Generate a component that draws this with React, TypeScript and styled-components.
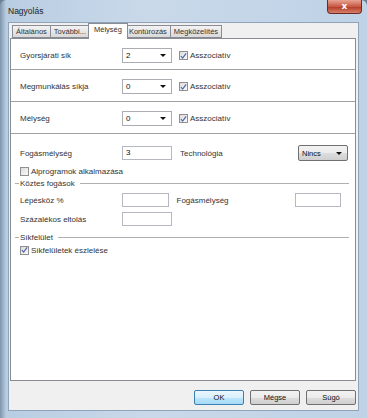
import styled, { createGlobalStyle } from 'styled-components';

const GlobalStyle = createGlobalStyle`
  html, body {
    margin: 0;
    padding: 0;
    background: #6e7f92;
  }
  body {
    font-family: "Liberation Sans", Arial, sans-serif;
  }
`;

const tabs = ['Általános', 'További...', 'Mélység', 'Kontúrozás', 'Megközelítés'];

export default function App() {
  return (
    <>
      <GlobalStyle />
      <Window>
        <TitleBar>
          <Title>Nagyolás</Title>
          <CloseButton>x</CloseButton>
        </TitleBar>
        <Client>
          <TabStrip>
            {tabs.map(t => (
              <Tab key={t} $active={t === 'Mélység'}>
                {t}
              </Tab>
            ))}
          </TabStrip>
          <Panel>
            <Row>
              <Label>Gyorsjárati sík</Label>
              <Combo>
                <span>2</span>
                <Arrow />
              </Combo>
              <Check checked>Asszociatív</Check>
            </Row>
            <Row>
              <Label>Megmunkálás síkja</Label>
              <Combo>
                <span>0</span>
                <Arrow />
              </Combo>
              <Check checked>Asszociatív</Check>
            </Row>
            <Row>
              <Label>Mélység</Label>
              <Combo>
                <span>0</span>
                <Arrow />
              </Combo>
              <Check checked>Asszociatív</Check>
            </Row>
            <Section>
              <Line>
                <Label>Fogásmélység</Label>
                <Field>3</Field>
                <Label $wide>Technológia</Label>
                <DropButton>
                  <span>Nincs</span>
                  <Arrow />
                </DropButton>
              </Line>
              <Line $mt={4}>
                <Check>Alprogramok alkalmazása</Check>
              </Line>
              <Group>Köztes fogások</Group>
              <Line $mt={3}>
                <Label>Lépésköz %</Label>
                <Field />
                <Label $wide>Fogásmélység</Label>
                <Field />
              </Line>
              <Line $mt={5}>
                <Label>Százalékos eltolás</Label>
                <Field />
              </Line>
              <Group $mt={4}>Síkfelület</Group>
              <Line $mt={-1}>
                <Check checked>Síkfelületek észlelése</Check>
              </Line>
            </Section>
          </Panel>
          <Footer>
            <Button $default>OK</Button>
            <Button>Mégse</Button>
            <Button>Súgó</Button>
          </Footer>
        </Client>
      </Window>
    </>
  );
}

function Check({ checked, children }: { checked?: boolean; children: React.ReactNode }) {
  return (
    <CheckWrap>
      <Box>
        {checked && (
          <svg width="8" height="8" viewBox="0 0 8 8">
            <path d="M1 4 L3 6.5 L7 1" fill="none" stroke="#4a62a8" strokeWidth="1.3" />
          </svg>
        )}
      </Box>
      {children}
    </CheckWrap>
  );
}

const Window = styled.div`
  width: 367px;
  height: 418px;
  box-sizing: border-box;
  padding: 0 8px 7px 8px;
  display: flex;
  flex-direction: column;
  background: linear-gradient(90deg, #7f95ab 0px, #b9cde2 6px, #c9d9ea 40%, #bfd2e6 100%);
  border-radius: 6px 6px 0 0;
`;

const TitleBar = styled.div`
  height: 22px;
  display: flex;
  justify-content: space-between;
  align-items: flex-start;
`;

const Title = styled.div`
  margin-top: 6px;
  font-size: 8.5px;
  color: #1e1e1e;
`;

const CloseButton = styled.div`
  width: 33px;
  height: 13px;
  margin-right: -3px;
  border: 1px solid #6d2a22;
  border-top: none;
  border-radius: 0 0 4px 4px;
  background: linear-gradient(#e8a493, #c75a44 50%, #b13a22 51%, #d7806a);
  color: #fff;
  font: bold 9px "DejaVu Sans", sans-serif;
  text-align: center;
  line-height: 12px;
`;

const Client = styled.div`
  flex: 1;
  background: #f0f0f0;
  border: 1px solid #8fa3b9;
  padding: 2px 2px 0 1px;
  display: flex;
  flex-direction: column;
`;

const TabStrip = styled.div`
  display: flex;
  align-items: flex-end;
  height: 13px;
  padding-left: 2px;
  position: relative;
  z-index: 1;
`;

const Tab = styled.div<{ $active?: boolean }>`
  height: ${p => (p.$active ? 15 : 11)}px;
  margin: ${p => (p.$active ? '0 -2px -1px -2px' : '0')};
  padding: 0 ${p => (p.$active ? 5 : 3)}px;
  border: 1px solid #898c95;
  border-bottom: ${p => (p.$active ? 'none' : '1px solid #898c95')};
  border-left: ${p => (p.$active ? '1px solid #898c95' : 'none')};
  background: ${p => (p.$active ? '#fff' : 'linear-gradient(#f3f3f3, #e6e6e6 50%, #d9d9d9)')};
  font-size: 7.5px;
  line-height: ${p => (p.$active ? 12 : 11)}px;
  color: #333;
  white-space: nowrap;
  box-sizing: content-box;
  position: relative;
  z-index: ${p => (p.$active ? 2 : 1)};

  &:first-child {
    border-left: 1px solid #898c95;
  }
`;

const Panel = styled.div`
  height: 343px;
  background: #fff;
  border: 1px solid #898c95;
  box-sizing: border-box;
  display: flex;
  flex-direction: column;
`;

const Row = styled.div`
  height: 32px;
  flex-shrink: 0;
  display: flex;
  align-items: center;
  padding: 2px 0 0 9px;
  box-sizing: border-box;
  border-bottom: 1px solid #a0a0a0;

  &:first-child {
    height: 31px;
    padding-top: 3px;
  }
`;

const Label = styled.div<{ $wide?: boolean }>`
  width: ${p => (p.$wide ? 118 : 102)}px;
  flex-shrink: 0;
  font-size: 8px;
  color: #333;
  white-space: nowrap;
`;

const Combo = styled.div`
  width: 50px;
  height: 15px;
  box-sizing: border-box;
  border: 1px solid #abadb3;
  display: flex;
  align-items: center;
  justify-content: space-between;
  padding: 0 5px 0 3px;
  font-size: 8px;
  color: #111;
  margin-right: 7px;
`;

const Arrow = styled.div`
  width: 0;
  height: 0;
  border-left: 3px solid transparent;
  border-right: 3px solid transparent;
  border-top: 3px solid #111;
`;

const CheckWrap = styled.div`
  display: flex;
  align-items: center;
  gap: 2px;
  font-size: 8px;
  color: #333;
  white-space: nowrap;
`;

const Box = styled.div`
  width: 9px;
  height: 9px;
  box-sizing: border-box;
  border: 1px solid #8f8f8f;
  background: linear-gradient(135deg, #dcdcdc, #fafafa);
  display: flex;
  align-items: center;
  justify-content: center;
`;

const Section = styled.div`
  display: flex;
  flex-direction: column;
  padding: 12px 6px 0 9px;
`;

const Line = styled.div<{ $mt?: number }>`
  height: 14px;
  margin-top: ${p => p.$mt ?? 0}px;
  display: flex;
  align-items: center;
`;

const Field = styled.div`
  width: 50px;
  height: 14px;
  box-sizing: border-box;
  border: 1px solid #b5b8c0;
  font-size: 8px;
  line-height: 12px;
  padding-left: 3px;
  color: #111;
  margin-right: 8px;
`;

const DropButton = styled.div`
  width: 50px;
  height: 16px;
  box-sizing: border-box;
  border: 1px solid #707070;
  border-radius: 2px;
  background: linear-gradient(#f2f2f2, #ebebeb 50%, #dddddd 51%, #cfcfcf);
  display: flex;
  align-items: center;
  justify-content: space-between;
  padding: 0 5px 0 3px;
  font-size: 7.5px;
  color: #111;
`;

const Group = styled.div<{ $mt?: number }>`
  display: flex;
  align-items: center;
  gap: 1px;
  height: 14px;
  margin-top: ${p => p.$mt ?? -2}px;
  margin-left: -5px;
  font-size: 8px;
  color: #333;

  &::before {
    content: '';
    width: 4px;
    border-top: 1px solid #b0b0b0;
  }

  &::after {
    content: '';
    flex: 1;
    border-top: 1px solid #b0b0b0;
    margin-left: 4px;
  }
`;

const Footer = styled.div`
  flex: 1;
  display: flex;
  justify-content: flex-end;
  align-items: flex-end;
  gap: 6px;
  padding: 0 0 5px 0;
`;

const Button = styled.div<{ $default?: boolean }>`
  width: 50px;
  height: 15px;
  box-sizing: border-box;
  border: 1px solid ${p => (p.$default ? '#3c7fb1' : '#707070')};
  border-radius: 2px;
  background: ${p =>
    p.$default
      ? 'linear-gradient(#eaf6fd, #d9f0fc 50%, #bee6fd 51%, #a7d9f5)'
      : 'linear-gradient(#f2f2f2, #ebebeb 50%, #dddddd 51%, #cfcfcf)'};
  font-size: 7.5px;
  color: #111;
  text-align: center;
  line-height: 13px;
`;
